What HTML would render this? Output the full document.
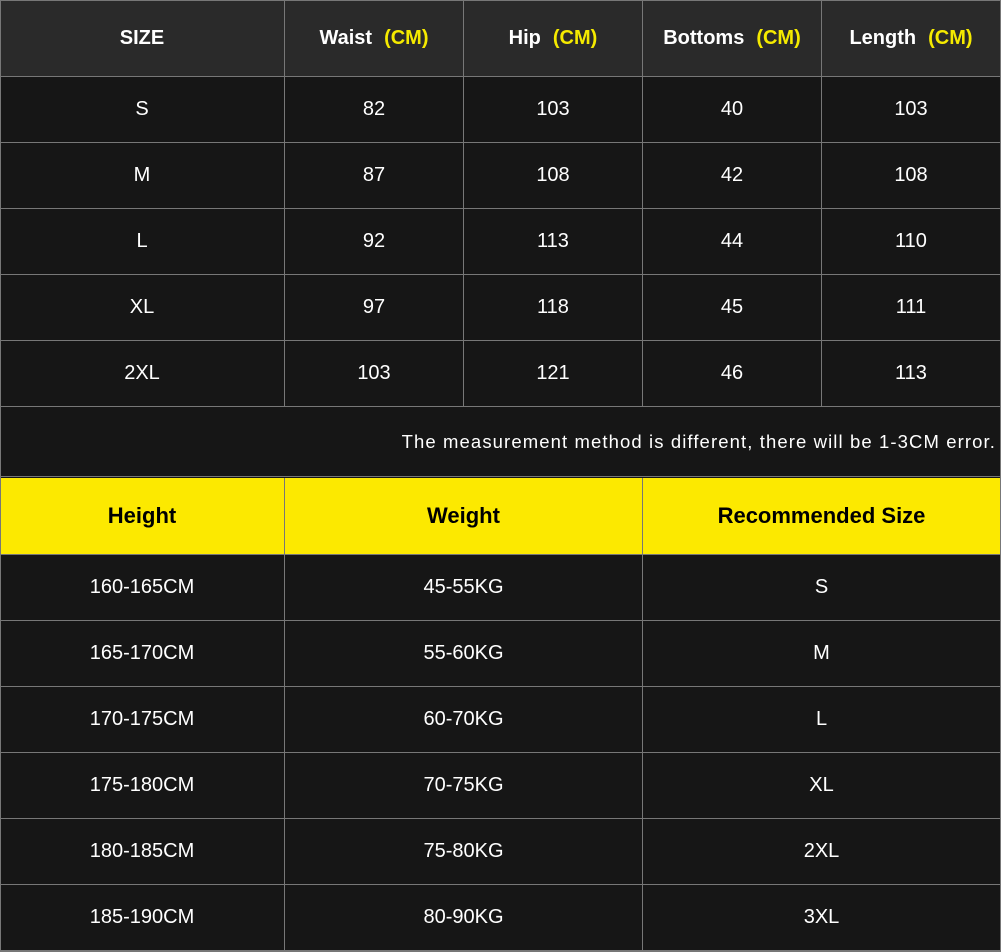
<!DOCTYPE html>
<html><head><meta charset="utf-8"><style>
*{margin:0;padding:0;box-sizing:border-box}
body{width:1001px;height:952px;background:#161616;position:relative;overflow:hidden;font-family:"Liberation Sans",sans-serif;color:#fff}
.c{position:absolute;display:flex;align-items:center;justify-content:center;font-size:20px;border-right:1px solid #777;border-bottom:1px solid #777}
.h{background:#2a2a2a;font-weight:bold}
.y{background:#fce900;color:#000;font-weight:bold;font-size:22px}
.cm{color:#f5ea00;margin-left:12px}
.note{position:absolute;left:0;top:407px;width:1000px;height:70px;display:flex;align-items:center;justify-content:flex-end;padding-right:4px;font-size:18.5px;letter-spacing:1.1px;border-bottom:1px solid #777}
.frame{position:absolute;left:0;top:0;width:1001px;height:952px;border:1px solid #777;pointer-events:none}
</style></head><body>
<div id="t"></div>
<div class="note">The measurement method is different, there will be 1-3CM error.</div>
<div class="frame"></div>
<script>
var t=document.getElementById('t'),h='';
var xs=[0,285,464,643,822,1001];
var ys=[0,77,143,209,275,341,407];
var hd=['SIZE','Waist<span class="cm">(CM)</span>','Hip<span class="cm">(CM)</span>','Bottoms<span class="cm">(CM)</span>','Length<span class="cm">(CM)</span>'];
var d=[['S',82,103,40,103],['M',87,108,42,108],['L',92,113,44,110],['XL',97,118,45,111],['2XL',103,121,46,113]];
for(var r=0;r<6;r++)for(var c=0;c<5;c++){
 var txt=r==0?hd[c]:d[r-1][c];
 h+='<div class="c'+(r==0?' h':'')+'" style="left:'+xs[c]+'px;top:'+ys[r]+'px;width:'+(xs[c+1]-xs[c])+'px;height:'+(ys[r+1]-ys[r])+'px">'+txt+'</div>';
}
var x2=[0,285,643,1001];
var y2=[478,555,621,687,753,819,885,951];
var hd2=['Height','Weight','Recommended Size'];
var d2=[['160-165CM','45-55KG','S'],['165-170CM','55-60KG','M'],['170-175CM','60-70KG','L'],['175-180CM','70-75KG','XL'],['180-185CM','75-80KG','2XL'],['185-190CM','80-90KG','3XL']];
for(var r=0;r<7;r++)for(var c=0;c<3;c++){
 var txt=r==0?hd2[c]:d2[r-1][c];
 h+='<div class="c'+(r==0?' y':'')+'" style="left:'+x2[c]+'px;top:'+y2[r]+'px;width:'+(x2[c+1]-x2[c])+'px;height:'+(y2[r+1]-y2[r])+'px">'+txt+'</div>';
}
t.innerHTML=h;
</script>
</body></html>
